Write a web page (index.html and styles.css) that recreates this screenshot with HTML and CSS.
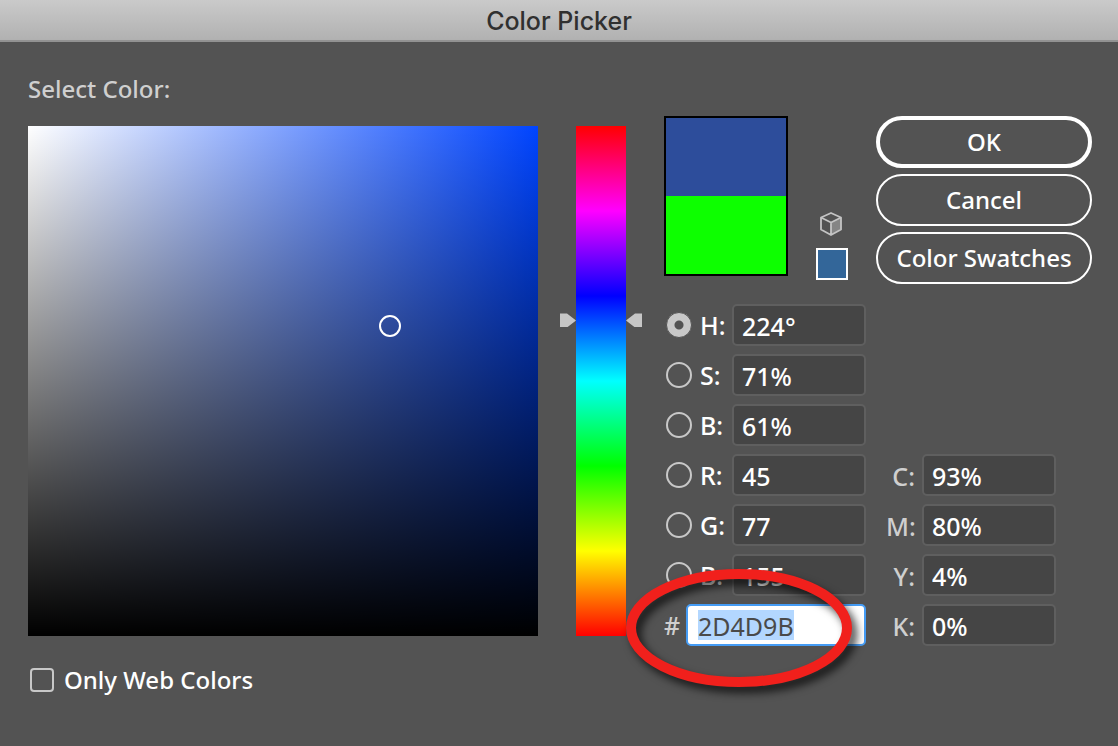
FILE: index.html
```html
<!DOCTYPE html>
<html lang="en">
<head>
<meta charset="utf-8">
<meta name="viewport" content="width=device-width, initial-scale=1">
<title>Color Picker</title>
<link rel="stylesheet" href="styles.css">
</head>
<body>
<header class="titlebar"><h1 class="title">Color Picker</h1></header>
<main class="dialog">
  <section class="picker">
    <h2 class="heading">Select Color:</h2>
    <div class="spectrum">
      <div class="field"><span class="cursor"></span></div>
      <input class="hue" type="range" min="0" max="360" value="224" aria-label="Hue">
    </div>
    <label class="web-only"><input class="tick" type="checkbox">Only Web Colors</label>
  </section>

  <form class="panel">
    <div class="top">
      <div class="compare"><span class="new"></span><span class="old"></span></div>
      <div class="websafe">
        <svg class="cube" width="24" height="26" viewBox="0 0 24 26" aria-hidden="true">
          <path d="M12 11.5 22 6.5v12L12 24z" fill="#858585"/>
          <path d="M12 2 22 6.5v12L12 24 2 18.500v-12zM2 6.500l10 5 10-5M12 11.500V24" fill="none" stroke="#c4c4c4" stroke-width="1.800" stroke-linejoin="round"/>
        </svg>
        <button class="safe-color" type="button" aria-label="Use web safe color"></button>
      </div>
      <div class="buttons">
        <button class="btn btn-default" type="button">OK</button>
        <button class="btn" type="button">Cancel</button>
        <button class="btn" type="button">Color Swatches</button>
      </div>
    </div>

    <div class="values">
      <div class="column">
        <div class="row"><input class="radio" type="radio" name="channel" id="ch-h" checked><label class="name" for="ch-h">H:</label><input class="box" type="text" value="224°" aria-label="Hue value"></div>
        <div class="row"><input class="radio" type="radio" name="channel" id="ch-s"><label class="name" for="ch-s">S:</label><input class="box" type="text" value="71%" aria-label="Saturation value"></div>
        <div class="row"><input class="radio" type="radio" name="channel" id="ch-v"><label class="name" for="ch-v">B:</label><input class="box" type="text" value="61%" aria-label="Brightness value"></div>
        <div class="row"><input class="radio" type="radio" name="channel" id="ch-r"><label class="name" for="ch-r">R:</label><input class="box" type="text" value="45" aria-label="Red value"></div>
        <div class="row"><input class="radio" type="radio" name="channel" id="ch-g"><label class="name" for="ch-g">G:</label><input class="box" type="text" value="77" aria-label="Green value"></div>
        <div class="row"><input class="radio" type="radio" name="channel" id="ch-b"><label class="name" for="ch-b">B:</label><input class="box" type="text" value="155" aria-label="Blue value"></div>
        <div class="row hex-row">
          <label class="hash" for="hex">#</label><input class="box hex" type="text" id="hex" value="2D4D9B">
          <svg class="ring" width="250" height="150" viewBox="0 0 250 150" aria-hidden="true"><ellipse cx="125" cy="74" rx="108" ry="54" fill="none" stroke="#f1201c" stroke-width="10"/></svg>
        </div>
      </div>
      <div class="column cmyk">
        <div class="row"><label class="ink" for="c">C:</label><input class="box" type="text" id="c" value="93%"></div>
        <div class="row"><label class="ink" for="m">M:</label><input class="box" type="text" id="m" value="80%"></div>
        <div class="row"><label class="ink" for="y">Y:</label><input class="box" type="text" id="y" value="4%"></div>
        <div class="row"><label class="ink" for="k">K:</label><input class="box" type="text" id="k" value="0%"></div>
      </div>
    </div>
  </form>
</main>
</body>
</html>
```
FILE: styles.css
```css
*, *::before, *::after { box-sizing: border-box; }

body {
  margin: 0;
  background: #535353;
  color: #fff;
  font: 500 24px/34px "Noto Sans", "Open Sans", sans-serif;
}

input, button { margin: 0; font: inherit; color: inherit; }

.titlebar {
  height: 42px;
  background: linear-gradient(#cacaca, #b1b1b1);
  border-bottom: 2px solid #929292;
}

.title {
  margin: 0;
  color: #303030;
  font: 500 25px/42px Inter, Roboto, sans-serif;
  text-align: center;
}

.dialog {
  display: flex;
  gap: 22px;
  padding: 30px 26px 30px 28px;
}

.picker { flex: 1; min-width: 0; }

.heading {
  margin: 0 0 20px;
  color: #cfcfcf;
  font: inherit;
}

.spectrum { display: flex; gap: 22px; }

.field {
  position: relative;
  flex: 1;
  aspect-ratio: 1;
  background:
    linear-gradient(transparent, #000),
    linear-gradient(to right, #fff, #0044ff);
}

.cursor {
  position: absolute;
  left: 71%;
  top: 39%;
  width: 22px;
  height: 22px;
  margin: -10px 0 0 -11px;
  border: 2px solid #fff;
  border-radius: 50%;
}

.hue {
  appearance: none;
  width: 82px;
  height: auto;
  writing-mode: vertical-lr;
  direction: rtl;
  background: linear-gradient(#f00, #f0f 16.67%, #00f 33.33%, #0ff 50%, #0f0 66.67%, #ff0 83.33%, #f00) center / 50px 100% no-repeat;
}

.hue::-webkit-slider-runnable-track { width: 82px; }

.hue::-webkit-slider-thumb {
  appearance: none;
  width: 82px;
  height: 14px;
  background: #c6c6c6;
  clip-path: polygon(0 0, 7px 0, 16px 7px, 66px 7px, 75px 0, 82px 0, 82px 14px, 75px 14px, 66px 7px, 16px 7px, 7px 14px, 0 14px);
}

.web-only {
  display: flex;
  align-items: center;
  gap: 10px;
  margin-top: 27px;
  padding-left: 2px;
}

.tick {
  appearance: none;
  width: 24px;
  height: 24px;
  border: 2px solid #c8c8c8;
  border-radius: 4px;
}

.panel { width: 428px; flex: none; padding-top: 44px; }

.top { display: flex; gap: 28px; align-items: flex-start; }

.compare {
  display: flex;
  flex-direction: column;
  width: 124px;
  height: 160px;
  border: 2px solid #000;
}

.new, .old { flex: 1; }
.new { background: #2d4d9b; }
.old { background: #0dff00; }

.websafe {
  display: flex;
  flex-direction: column;
  align-items: center;
  gap: 11px;
  width: 32px;
  padding-top: 95px;
}

.cube { align-self: flex-start; margin-left: 3px; }

.safe-color {
  width: 32px;
  height: 32px;
  padding: 0;
  background: #369;
  border: 2px solid #fff;
}

.buttons { display: flex; flex: 1; flex-direction: column; gap: 6px; }

.btn {
  height: 52px;
  padding: 0;
  background: none;
  border: 2px solid #fff;
  border-radius: 26px;
  white-space: nowrap;
}

.btn-default { border-width: 4px; }

.values {
  display: flex;
  gap: 20px;
  margin-top: 20px;
  font-size: 25px;
}

.column { display: flex; flex-direction: column; gap: 8px; }

.cmyk { justify-content: flex-end; }

.row { display: flex; align-items: center; height: 42px; }

.radio {
  appearance: none;
  width: 26px;
  height: 26px;
  margin: 0 8px 0 2px;
  border: 2px solid #c8c8c8;
  border-radius: 50%;
}

.radio:checked {
  background: #c8c8c8 radial-gradient(circle, #535353 4px, #c8c8c8 5px);
  border-width: 1px;
  border-color: #535353;
}

.name { width: 32px; }

.box {
  width: 134px;
  height: 42px;
  padding: 2px 8px 0;
  background: #454545;
  border: 2px solid #5f5f5f;
  border-radius: 5px;
  outline: 0;
}

.ink { width: 36px; padding: 2px 7px 0 0; color: #cfcfcf; text-align: right; }

.hex-row { position: relative; }

.hash { width: 22px; color: #cfcfcf; }

.hex {
  width: 180px;
  padding: 2px 10px 0;
  color: #4a4a4a;
  font-weight: 400;
  background: #fff linear-gradient(#b3d7ff, #b3d7ff) 10px 4px / 96px 30px no-repeat;
  border-color: #459cf5;
}

.ring {
  position: absolute;
  left: -50px;
  top: -50px;
  filter: drop-shadow(5px 6px 4px rgba(0, 0, 0, 0.7));
  pointer-events: none;
}
```
